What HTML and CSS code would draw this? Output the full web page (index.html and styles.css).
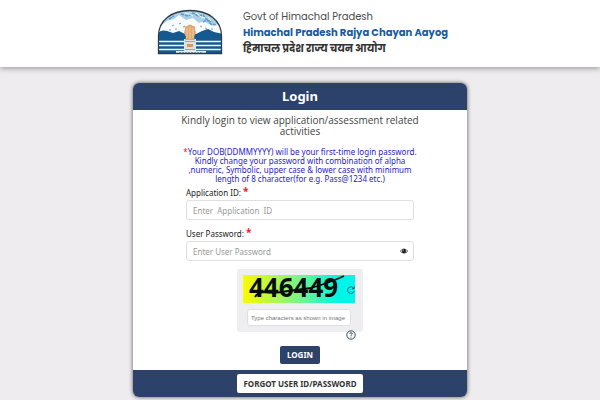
FILE: index.html
```
<!DOCTYPE html>
<html lang="en">
<head>
<meta charset="utf-8">
<title>Login</title>
<link rel="stylesheet" href="styles.css">
</head>
<body>
<header class="site-header">
  <svg class="logo" viewBox="0 0 66 46" aria-hidden="true">
    <defs>
      <clipPath id="arch"><path d="M1.500 44.500V27C1.500 11 15 1.500 33 1.500S64.500 11 64.500 27V44.500Z"/></clipPath>
    </defs>
    <g clip-path="url(#arch)">
      <rect width="66" height="46" fill="#a9cfe6"/>
      <path d="M0 23L6 15L10 12L17 10L22 6L29 11L36 9L42 14L47 12L55 17L60 15L66 22V34H0Z" fill="#f7fbfd"/>
      <path d="M24 5l7 2 5-3 5 3 5-1 3 4 6 3M46 13l4-2 4 4 6 1M12 10l5-3" fill="none" stroke="#5a9cc6" stroke-width="1.500" stroke-dasharray="3 1"/>
      <path d="M28 4l5 1 3 2M39 4l5 4 4 1M51 8l3 4" fill="none" stroke="#eef6fa" stroke-width="1"/>
      <path d="M15 17l2-1M22 15l2-1M26 18l2-1M18 20h2M12 21h2M43 17l2 1M48 19l2 1M54 20h2" stroke="#8a9ba5" stroke-width="1"/>
      <path d="M0 25Q4 20 10 22L16 24L22 22L28 25H39L45 22L51 20L57 23L66 25V46H0Z" fill="#145a91"/>
      <path d="M0 32.500H66M0 36.500H66M0 40.500H66" stroke="#f4f9fc" stroke-width="1.500"/>
      <path d="M19 42H49V46H19Z" fill="#e3eef5"/>
      <path d="M27 30H39V42H27Z" fill="#dfe2dd"/>
      <path d="M28 20q-1-3 2-3q3-3 6 0q3 0 2 3l1 4-2 4 1 3H28l1-3-2-4Z" fill="#dda76f"/>
      <path d="M30 19v10M33 18v12M36 19v10" stroke="#f1d0a6" stroke-width="1"/>
      <path d="M28 32h10v1H28ZM30 35h6v3h-6ZM28 40h10v1H28Z" fill="#cf9a66"/>
      <path d="M22 43.500H46" stroke="#7fa9c4" stroke-dasharray="2 1"/>
    </g>
    <path d="M1.500 44.500V27C1.500 11 15 1.500 33 1.500S64.500 11 64.500 27V44.500Z" fill="none" stroke="#303a43" stroke-width="1.300"/>
  </svg>
  <div class="org">
    <span class="org-govt">Govt of Himachal Pradesh</span>
    <strong class="org-name">Himachal Pradesh Rajya Chayan Aayog</strong>
    <strong class="org-hindi" lang="hi">हिमाचल प्रदेश राज्य चयन आयोग</strong>
  </div>
</header>
<main class="page">
  <form class="card">
    <h1 class="card-head">Login</h1>
    <div class="card-body">
      <p class="intro">Kindly login to view application/assessment related activities</p>
      <p class="note"><span class="star">*</span>Your DOB(DDMMYYYY) will be your first-time login password.<br>Kindly change your password with combination of alpha<br>,numeric, Symbolic, upper case &amp; lower case with minimum<br>length of 8 character(for e.g. Pass@1234 etc.)</p>
      <div class="field">
        <label for="appid">Application ID: <span class="star">*</span></label>
        <input id="appid" type="text" placeholder="Enter&nbsp; Application&nbsp; ID">
      </div>
      <div class="field">
        <label for="pass">User Password: <span class="star">*</span></label>
        <div class="pass-box">
          <input id="pass" type="password" placeholder="Enter User Password">
          <button class="eye" type="button" aria-label="Show password">
            <svg viewBox="0 0 8 6"><path d="M0 3Q4-2 8 3Q4 8 0 3Z" fill="#222"/><path d="M1 3Q1.600 1.900 2.400 1.500Q1.600 3 2.400 4.500Q1.600 4 1 3ZM7 3Q6.400 1.900 5.600 1.500Q6.400 3 5.600 4.500Q6.400 4 7 3Z" fill="#fff"/><path d="M3 2.700Q3.100 1.800 4 1.700" fill="none" stroke="#fff" stroke-width=".5"/></svg>
          </button>
        </div>
      </div>
      <div class="captcha">
        <div class="captcha-image">
          <span class="captcha-code">446449</span>
          <svg class="strike" viewBox="0 0 112 28" aria-hidden="true"><path d="M12 22Q14 18 20 17Q32 19 45 16L68 13Q86 8 101 1" fill="none" stroke="#080c0b" stroke-width="1.800"/></svg>
          <button class="refresh" type="button" aria-label="Refresh code">
            <svg viewBox="0 0 8 8"><path d="M6.800 2.500A3.300 3.300 0 1 0 7 5.300M7.200.500V2.700H5" fill="none" stroke="#17566c" stroke-width=".9"/></svg>
          </button>
        </div>
        <input class="captcha-input" type="text" aria-label="Captcha" placeholder="Type characters as shown in image">
      </div>
      <button class="help" type="button" aria-label="Help">
        <svg viewBox="0 0 10 10"><circle cx="5" cy="5" r="4.200" fill="none" stroke="#23414b" stroke-width=".9"/><path d="M3.700 3.900Q3.800 2.700 5 2.700T6.300 3.900C6.300 4.800 5 4.700 5 5.900M5 6.600V7.500" fill="none" stroke="#23414b" stroke-width=".9"/></svg>
      </button>
      <button class="login" type="submit">LOGIN</button>
    </div>
    <div class="card-foot">
      <button class="forgot" type="button">FORGOT USER ID/PASSWORD</button>
    </div>
  </form>
</main>
</body>
</html>
```
FILE: styles.css
```
* { box-sizing: border-box; }

body {
  margin: 0;
  background: #eeecee;
  font-family: "Noto Sans", "Open Sans", sans-serif;
  color: #444;
}

button {
  margin: 0;
  padding: 0;
  border: 0;
  background: none;
  font-family: inherit;
}

button svg { display: block; width: 100%; }

.site-header {
  display: flex;
  justify-content: center;
  gap: 20px;
  padding: 9px 0 10px 5px;
  background: #fff;
  box-shadow: 0 1px 6px rgba(0, 0, 0, .4);
}

.logo { width: 66px; height: 46px; }

.org {
  display: flex;
  flex-direction: column;
  font-family: Poppins, Inter, "Noto Sans", sans-serif;
  font-size: 10px;
  line-height: 16px;
  white-space: nowrap;
}

.org-govt { color: #4b4b4d; }
.org-name { color: #175c9f; }
.org-hindi { color: #333; }

.page { padding: 16px 16px 3px; }

.card {
  max-width: 334px;
  margin: 0 auto;
  border-radius: 6px;
  background: #fff;
  box-shadow: 0 0 4px rgba(0, 0, 0, .65);
}

.card-head {
  margin: 0;
  border-radius: 6px 6px 0 0;
  background: #2c426a;
  color: #fff;
  font-size: 13px;
  line-height: 27px;
  text-align: center;
}

.card-body {
  display: flex;
  flex-direction: column;
  align-items: center;
  padding: 5px 53px 6px;
}

.intro {
  margin: 0 -10px 10px;
  font-family: "Open Sans", "Noto Sans", sans-serif;
  font-size: 10px;
  line-height: 11px;
  text-align: center;
}

.note {
  margin: 0 0 2px;
  color: #2923c6;
  font-size: 8px;
  line-height: 9px;
  text-align: center;
  white-space: nowrap;
}

.star { color: #e8192c; }

.field {
  width: 100%;
  margin-bottom: 6px;
}

.field label {
  display: block;
  color: #222;
  font-size: 8px;
  line-height: 15px;
}

.field label .star {
  font-size: 10px;
  font-weight: 700;
  line-height: 8px;
  vertical-align: 1px;
}

input {
  display: block;
  width: 100%;
  border: 1px solid #e0e0e0;
  border-radius: 3px;
  background: #fff;
  font-family: inherit;
}

input::placeholder { color: #999; opacity: 1; }

.field input {
  height: 20px;
  padding: 0 6px;
  font-size: 8px;
}

.pass-box { position: relative; }

.eye {
  position: absolute;
  top: 7px;
  right: 6px;
  width: 8px;
}

.captcha {
  display: flex;
  flex-direction: column;
  align-items: center;
  gap: 6px;
  margin-top: 2px;
  padding: 6px 8px 6px 6px;
  border-radius: 3px;
  background: #eeedef;
}

.captcha-image {
  position: relative;
  width: 112px;
  height: 28px;
  background: linear-gradient(90deg, #fbfa00, #75f68a 50%, #00f5e5 85%, #00f5ee);
}

.captcha-code {
  display: block;
  padding-left: 6px;
  color: #080c0b;
  font-family: "Noto Sans", sans-serif;
  font-size: 26px;
  font-weight: 700;
  line-height: 24px;
}

.strike {
  position: absolute;
  inset: 0;
}

.refresh {
  position: absolute;
  right: 0;
  bottom: 9px;
  width: 8px;
}

.captcha-input {
  width: 104px;
  height: 17px;
  padding: 0 3px;
  font-family: "Liberation Sans", sans-serif;
  font-size: 6px;
}

.captcha-input::placeholder { color: #777; }

.help {
  align-self: flex-end;
  width: 10px;
  margin: -2px 58px 6px 0;
}

.login {
  padding: 0 7px;
  border-radius: 2px;
  background: #2c426a;
  color: #fff;
  font-size: 8px;
  font-weight: 700;
  line-height: 18px;
}

.card-foot {
  padding: 4px;
  border-radius: 0 0 6px 6px;
  background: #2c426a;
  text-align: center;
}

.forgot {
  display: block;
  margin: 0 auto;
  padding: 0 6px;
  border-radius: 2px;
  background: #fff;
  color: #333;
  font-size: 8px;
  font-weight: 700;
  line-height: 19px;
}
```
